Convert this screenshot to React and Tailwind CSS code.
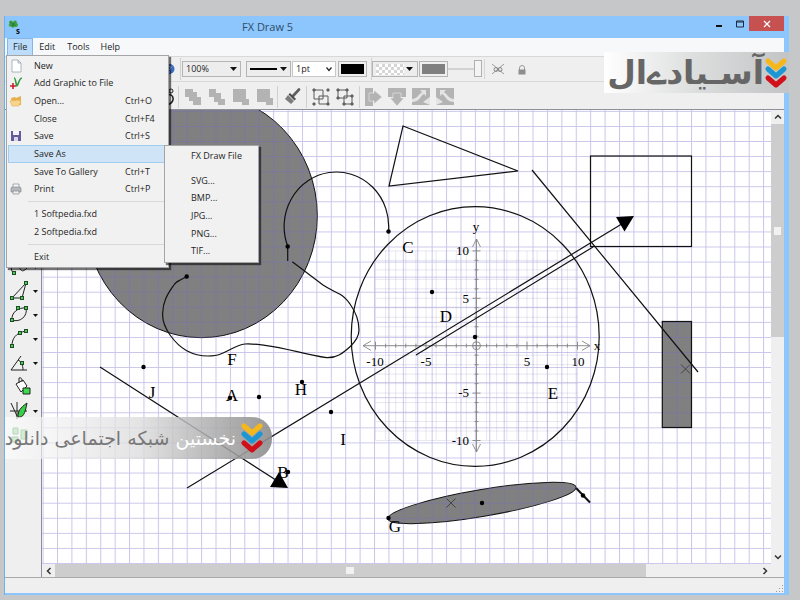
import React, { useState } from 'react';

const fileItems = [
  { label: 'New', icon: 'new' },
  { label: 'Add Graphic to File', icon: 'graphic' },
  { label: 'Open...', keys: 'Ctrl+O', icon: 'open' },
  { label: 'Close', keys: 'Ctrl+F4' },
  { label: 'Save', keys: 'Ctrl+S', icon: 'save' },
  { label: 'Save As', active: true },
  { label: 'Save To Gallery', keys: 'Ctrl+T' },
  { label: 'Print', keys: 'Ctrl+P', icon: 'print' },
];

const recentFiles = ['1 Softpedia.fxd', '2 Softpedia.fxd'];
const exportFormats = ['SVG...', 'BMP...', 'JPG...', 'PNG...', 'TIF...'];

const MenuIcon = ({ name }) => (
  <svg viewBox="0 0 14 14" className="w-3.5 h-3.5" aria-hidden="true">
    {name === 'new' && <path d="M3 1h6l3 3v9H3z M9 1v3h3" fill="#fff" stroke="#9aa4b2" strokeWidth="0.8" />}
    {name === 'graphic' && (
      <g fill="none">
        <path d="M5 2c2 0 2 8 3 8s2-8 5-8" stroke="#2f9a3c" strokeWidth="1.6" />
        <path d="M4 7v6M1 10h6" stroke="#c9202c" strokeWidth="1.6" />
      </g>
    )}
    {name === 'open' && (
      <g>
        <path d="M2 4l4-1 1 1 5-2v9H3z" fill="#e6b04c" />
        <path d="M1 7l8-1 3 1-2 5H3z" fill="#f8d48a" stroke="#e0a848" strokeWidth="0.5" />
      </g>
    )}
    {name === 'save' && (
      <g>
        <path d="M2 2h10v10H2z" fill="#665a9c" />
        <path d="M4 2h6v4H4z" fill="#f4f4fa" />
        <path d="M5 8h4v4H5z" fill="#d9d6ea" />
      </g>
    )}
    {name === 'print' && (
      <g stroke="#868a90" strokeWidth="0.7">
        <path d="M4 2h6v4H4z" fill="#f7f7f7" />
        <path d="M2 6l1-1h8l1 1v4H2z" fill="#b4b8bf" />
        <path d="M4 9h6v3H4z" fill="#eee" />
      </g>
    )}
  </svg>
);

const MenuRow = ({ label, keys, icon, active }) => (
  <button
    type="button"
    className={`flex items-center text-left border ${
      active ? 'bg-[#cfe4f7] border-[#a3cdee]' : 'border-transparent'
    }`}
  >
    <span className="w-[25px] shrink-0 flex items-center">{icon && <MenuIcon name={icon} />}</span>
    <span className="flex-1 whitespace-nowrap">{label}</span>
    {keys && <span className="w-8 mr-2.5 whitespace-nowrap">{keys}</span>}
  </button>
);

const FileMenu = () => (
  <div className="absolute z-20 left-px top-[39px] w-[163px] bg-[#f1f1f1] border border-[#a5a5a5] shadow-[2px_2px_1px_rgba(0,0,0,0.55)] pt-px pb-px pl-px text-[9px] leading-3">
    <div className="grid grid-rows-8 h-[141px]">
      {fileItems.map((item) => (
        <MenuRow key={item.label} {...item} />
      ))}
    </div>
    <div className="ml-5 h-px my-[3px] bg-[#d9d9d9]" />
    <div className="grid grid-rows-2 h-9">
      {recentFiles.map((name) => (
        <MenuRow key={name} label={name} />
      ))}
    </div>
    <div className="ml-5 h-px my-[3px] bg-[#d9d9d9]" />
    <div className="grid h-[18px]">
      <MenuRow label="Exit" />
    </div>
  </div>
);

const SaveAsMenu = () => (
  <div className="absolute z-30 left-[159px] top-[129px] w-[95px] bg-[#f1f1f1] border border-[#a5a5a5] shadow-[2px_2px_1px_rgba(0,0,0,0.55)] pt-px pb-0.5 text-[9px] leading-3">
    <button type="button" className="block w-full h-[18px] pl-[26px] text-left whitespace-nowrap">FX Draw File</button>
    <div className="grid grid-rows-5 h-[88px] mt-[7px]">
      {exportFormats.map((f) => (
        <button key={f} type="button" className="pl-[26px] text-left">{f}</button>
      ))}
    </div>
  </div>
);

const Caret = () => (
  <svg viewBox="0 0 7 4" className="w-[7px] h-1 shrink-0" aria-hidden="true">
    <path d="M0 0h7L3.5 4z" fill="#111" />
  </svg>
);

const Divider = () => <div className="w-px h-[22px] bg-[#d0d0d0] shrink-0" />;

const TitleBar = () => (
  <header className="h-[22px] shrink-0 flex items-start pl-[3px]">
    <svg viewBox="0 0 16 16" className="w-4 h-4 mt-1" aria-hidden="true">
      <g fill="#3fa344">
        <circle cx="3" cy="2.500" r="2" />
        <circle cx="7" cy="2.500" r="2" />
        <circle cx="2.500" cy="5" r="1.800" />
        <circle cx="8" cy="5" r="2" />
        <circle cx="5" cy="6" r="1.800" />
      </g>
      <path d="M2 2l6 4M7.500 2L3 6M5 3v4" stroke="#1b6a28" strokeWidth="0.700" />
      <text x="8" y="14" fontSize="8" fontWeight="bold" fontFamily="Open Sans, sans-serif" fill="#111">s</text>
    </svg>
    <h1 className="ml-[218px] flex-1 text-[11px] leading-[22px] text-[#2e4d69]">FX Draw 5</h1>
    <button type="button" aria-label="Minimize" className="w-6 h-[15px] flex items-center justify-center">
      <svg viewBox="0 0 8 8" className="w-2 h-2"><path d="M1 6h6" stroke="#111" strokeWidth="2" /></svg>
    </button>
    <button type="button" aria-label="Maximize" className="w-[18px] h-[15px] flex items-center justify-center">
      <svg viewBox="0 0 8 8" className="w-2 h-2"><path d="M.5 1h7v6h-7zM.5 2h7" fill="none" stroke="#1c2c3c" /></svg>
    </button>
    <button type="button" aria-label="Close" className="w-[35px] h-[15px] bg-[#c75050] flex items-center justify-center">
      <svg viewBox="0 0 8 8" className="w-2 h-2"><path d="M1 1l6 6M7 1L1 7" stroke="#fff" strokeWidth="1.3" /></svg>
    </button>
  </header>
);

const MenuBar = () => (
  <nav className="h-[18px] shrink-0 bg-[#f6f8fa] flex items-center pl-0.5 text-[9px] leading-4">
    <button type="button" className="px-[5px] bg-[#bcdcfb] border border-[#84b6ea]">File</button>
    <button type="button" className="px-[6px]">Edit</button>
    <button type="button" className="px-[6px]">Tools</button>
    <button type="button" className="px-[5px]">Help</button>
  </nav>
);

const StyleToolbar = () => {
  const [opacity, setOpacity] = useState(100);

  return (
    <div className="h-[26px] shrink-0 border-y border-[#d8d8d8] flex items-center pl-[159px]">
      <svg viewBox="0 0 11 12" className="w-[11px] h-3 shrink-0" aria-hidden="true">
        <circle cx="5.5" cy="6" r="5" fill="#3a6fc4" />
        <path d="M4 4.5c1-2 4-1 2.5 1L5.500 7M5.500 8.500v1" fill="none" stroke="#fff" />
      </svg>
      <div className="w-[5px]" />
      <Divider />
      <div className="ml-px relative flex items-center">
        <select aria-label="Zoom" className="appearance-none w-[59px] h-4 border border-[#b5b5b5] bg-[#ededed] pl-[3px] text-[9px] leading-3">
          <option>100%</option>
        </select>
        <span className="absolute right-1 pointer-events-none flex"><Caret /></span>
      </div>
      <button type="button" aria-label="Line style" className="ml-[5px] w-[45px] h-4 border border-[#b5b5b5] bg-[#ededed] flex items-center justify-between px-[3px]">
        <span className="w-[27px] h-0.5 bg-black" />
        <Caret />
      </button>
      <div className="ml-px relative flex items-center">
        <select aria-label="Line width" className="appearance-none w-[44px] h-4 border border-[#c8c8c8] bg-white pl-[3px] text-[9px] leading-3">
          <option>1pt</option>
        </select>
        <svg viewBox="0 0 6 6" className="absolute right-1 w-1.5 h-1.5 pointer-events-none" aria-hidden="true">
          <path d="M.5 1.500L3 4.500l2.500-3" fill="none" stroke="#222" strokeWidth="1.200" />
        </svg>
      </div>
      <button type="button" aria-label="Line colour" className="ml-0.5 w-[29px] h-4 border border-[#b5b5b5] p-0.5">
        <span className="block h-full bg-black" />
      </button>
      <div className="w-1" />
      <Divider />
      <button type="button" aria-label="Fill pattern" className="w-[46px] h-4 border border-[#b5b5b5] bg-[#ededed] flex items-center justify-between pl-[3px] pr-1">
        <svg className="w-7 h-[11px]" aria-hidden="true">
          <defs>
            <pattern id="checks" width="6" height="6" patternUnits="userSpaceOnUse">
              <rect width="6" height="6" fill="#fff" />
              <path d="M0 0h3v3H0zM3 3h3v3H3z" fill="#d6d6d6" />
            </pattern>
          </defs>
          <rect width="28" height="11" fill="url(#checks)" />
        </svg>
        <Caret />
      </button>
      <button type="button" aria-label="Fill colour" className="ml-px w-[29px] h-4 border border-[#b5b5b5] p-0.5">
        <span className="block h-full bg-[#808080]" />
      </button>
      <input
        type="range"
        aria-label="Opacity"
        value={opacity}
        onChange={(e) => setOpacity(e.target.value)}
        className="appearance-none w-[34px] h-[18px] bg-transparent [&::-webkit-slider-runnable-track]:h-0.5 [&::-webkit-slider-runnable-track]:bg-[#d2d2d2] [&::-webkit-slider-thumb]:appearance-none [&::-webkit-slider-thumb]:w-2 [&::-webkit-slider-thumb]:h-[17px] [&::-webkit-slider-thumb]:-mt-2 [&::-webkit-slider-thumb]:bg-[#f4f4f4] [&::-webkit-slider-thumb]:border [&::-webkit-slider-thumb]:border-[#b0b0b0]"
      />
      <div className="w-px h-5 ml-0.5 bg-[#d6d6d6]" />
      <button type="button" aria-label="Hide" className="ml-[6px]">
        <svg viewBox="0 0 14 14" className="w-3.5 h-3.5">
          <g fill="none" stroke="#858585">
            <path d="M1 2l12 10M13 2L1 12" strokeWidth="0.8" />
            <circle cx="5" cy="7.500" r="2" />
            <circle cx="9" cy="7.500" r="2" />
          </g>
        </svg>
      </button>
      <button type="button" aria-label="Lock" className="ml-3 mt-0.5">
        <svg viewBox="0 0 10 10" className="w-2.5 h-2.5">
          <path d="M2.500 5V3a2.500 2.500 0 015 0v2" fill="none" stroke="#9a9a9a" />
          <rect x="1.500" y="4.500" width="7" height="5" fill="#8e8e8e" />
        </svg>
      </button>
    </div>
  );
};

const editIcons = {
  front: <path d="M1 1h8v3h4v5h4v8h-8v-4H5V9H1z" fill="#b3b3b3" />,
  forward: <path d="M1 1h7v4h5v6h4v6h-7v-3H6V9H1z" fill="#b3b3b3" />,
  back: <path d="M1 1h13v10h3v6h-7v-3H1z" fill="#b3b3b3" />,
  backward: <path d="M1 1h13v9h3v7h-7v-3H1z" fill="#b3b3b3" />,
  brush: (
    <g>
      <path d="M16 1.500L10 8" stroke="#5d5d5d" strokeWidth="2.600" strokeLinecap="round" />
      <path d="M7 5l6 6-1.500 1.500-6-6z" fill="#4c4c4c" />
      <path d="M5 7l6 6-3 3-6-5z" fill="#7c7c7c" />
    </g>
  ),
  group: (
    <g fill="none" stroke="#5a5a5a">
      <path d="M2 2h9v9H2zM7 8h9v8H7z" />
      <path d="M1 1h2v2H1zM15 1h2v2h-2zM1 15h2v2H1zM15 15h2v2h-2z" fill="#777" />
    </g>
  ),
  ungroup: (
    <g fill="none" stroke="#5a5a5a">
      <path d="M2 2h9v8H2zM8 8h8v8H8z" />
      <path d="M1 1h2v2H1zM10 1h2v2h-2zM1 9h2v2H1zM7 15h2v2H7zM15 15h2v2h-2zM15 7h2v2h-2z" fill="#777" />
    </g>
  ),
  right: (
    <g fill="#b3b3b3">
      <path d="M1 0h8v18H1z" />
      <path d="M5 5h5V2l8 7-8 7v-3H5z" stroke="#efefef" strokeWidth="0.6" />
    </g>
  ),
  down: (
    <g fill="#b3b3b3">
      <path d="M0 0h18v9H0z" />
      <path d="M5 5v5H2l7 8 7-8h-3V5z" stroke="#efefef" strokeWidth="0.6" />
    </g>
  ),
  rotateLeft: (
    <g>
      <path d="M0 0h18v17H0z" fill="#b3b3b3" />
      <path d="M8 2h6v6l-2-2c-4 2-4 8-12 8v-3c5 0 6-4 10-7zM11 14l7-5v8z" fill="#e4e4e4" />
    </g>
  ),
  rotateRight: (
    <g>
      <path d="M0 0h18v17H0z" fill="#b3b3b3" />
      <path d="M10 2H4v6l2-2c4 2 4 8 12 8v-3c-5 0-6-4-10-7zM7 14L0 9v8z" fill="#e4e4e4" />
    </g>
  ),
};

const EditButton = ({ name }) => (
  <button type="button" aria-label={name} className="w-6 h-6 flex items-center justify-center">
    <svg viewBox="0 0 18 18" className="w-[18px] h-[18px]">{editIcons[name]}</svg>
  </button>
);

const EditToolbar = () => (
  <div className="h-7 shrink-0 border-b border-[#8e8e9c] flex items-center pt-0.5 pl-[157px]">
    <svg viewBox="0 0 12 18" className="w-3 h-[18px] shrink-0" aria-hidden="true">
      <g fill="none" stroke="#222">
        <circle cx="9" cy="3" r="2" />
        <path d="M4 7c9-3 10 9 0 10" strokeWidth="1.600" />
      </g>
    </svg>
    <div className="w-1" />
    <Divider />
    <div className="w-0.5" />
    <EditButton name="front" />
    <EditButton name="forward" />
    <EditButton name="back" />
    <EditButton name="backward" />
    <Divider />
    <div className="w-0.5" />
    <EditButton name="brush" />
    <div className="w-0.5" />
    <Divider />
    <div className="w-0.5" />
    <EditButton name="group" />
    <EditButton name="ungroup" />
    <div className="w-0.5" />
    <Divider />
    <div className="w-px" />
    <EditButton name="right" />
    <EditButton name="down" />
    <EditButton name="rotateLeft" />
    <EditButton name="rotateRight" />
  </div>
);

// small green handles shared by the shape tools
const Handle = ({ x, y }) => (
  <rect x={x - 1.5} y={y - 1.5} width="3" height="3" fill="#4fc95a" stroke="#1d4d22" />
);

const shapeTools = [
  {
    name: 'Curve',
    menu: true,
    art: <g><path d="M4 16C-1 8 6 2 9 8s4 8 9 3" /><Handle x={5} y={16} /></g>,
  },
  {
    name: 'Polygon',
    menu: true,
    art: <g><path d="M3 17L17 2l-4 15z" /><Handle x={17} y={2} /><Handle x={3} y={17} /><Handle x={13} y={17} /></g>,
  },
  {
    name: 'Ellipse',
    menu: true,
    art: <g><path d="M3 15C2 8 9 2 17 3c2 8-6 15-14 12z" /><Handle x={3} y={15} /><Handle x={9} y={3} /><Handle x={17} y={3} /></g>,
  },
  {
    name: 'Arc',
    menu: true,
    art: <g><path d="M3 17C3 10 6 4 17 2" /><Handle x={3} y={17} /><Handle x={11} y={4} /><Handle x={17} y={2} /></g>,
  },
  {
    name: 'Angle',
    menu: true,
    art: <g><path d="M12 3L2 17h16M9 7c3 1 5 5 5 10" /><Handle x={13} y={10} /></g>,
  },
  {
    name: 'Fill',
    art: (
      <g>
        <path d="M7 7l7-4 4 6-6 6z" fill="#fff" />
        <path d="M10 6V1c3-1 3 2 3 4" />
        <path d="M14 11h7v6h-7z" fill="#3ddc4e" />
      </g>
    ),
  },
  {
    name: 'Function',
    menu: true,
    art: (
      <g>
        <path d="M1 10h17M8 1v17M2 2l6 13" />
        <path d="M18 2c-7 5-9 8-9 14 5 1 7-3 9-14z" fill="#35d046" />
      </g>
    ),
  },
  {
    name: 'Text',
    art: <g stroke="#4d9c56"><path d="M4 3h5v6H4zM12 5h6v9h-6zM3 12h6v5H3z" fill="#8fd497" /></g>,
  },
];

const ShapeBar = () => (
  <aside className="w-[37px] shrink-0 border-r border-[#8e8e9c] pt-[145px] pl-1">
    {shapeTools.map((tool) => (
      <button key={tool.name} type="button" aria-label={tool.name} className="w-[29px] h-6 flex items-center">
        <svg viewBox="0 0 22 20" className="w-[22px] h-5 shrink-0" fill="none" stroke="#222">{tool.art}</svg>
        {tool.menu && (
          <svg viewBox="0 0 5 3" className="w-[5px] h-[3px] ml-0.5 shrink-0" aria-hidden="true"><path d="M0 0h5L2.500 3z" fill="#111" /></svg>
        )}
      </button>
    ))}
  </aside>
);

const pointLabels = [
  ['A', 232, 401], ['B', 283, 478], ['C', 408, 253], ['D', 446, 322], ['E', 553, 399],
  ['F', 232, 365], ['G', 395, 532], ['H', 301, 395], ['I', 343, 445], ['J', 152, 398],
];

const points = [
  [143.5, 367], [259, 397], [230, 398], [302, 382], [331, 412], [432, 292], [475, 337], [547, 367],
  [288, 472], [388.5, 231.5], [388.5, 518], [287.7, 246.5], [186.7, 276.5], [482, 503], [583, 495.5],
];

const origin = { x: 476.5, y: 345.7 };
const unit = { x: 10.1, y: 9.48 };
const steps = Array.from({ length: 21 }, (_, i) => i - 10);

const Axes = () => {
  const { x: ox, y: oy } = origin;

  return (
    <g>
      <g stroke="#8f88bb" strokeOpacity="0.2">
        {steps.map((n) => (
          <path key={n} d={`M${ox + n * unit.x} 251v189M375.500 ${oy + n * unit.y}h202`} />
        ))}
      </g>
      <g stroke="#858585" fill="none" strokeWidth="0.9">
        <path d="M363 345.700H590M476.500 239V452" />
        <path d="M371 341l-8 4.700 8 4.700M582 341l8 4.700-8 4.700M472.500 247l4-8 4 8M472.500 444l4 8 4-8" />
        <circle cx={ox} cy={oy} r="4" />
        {steps.map((n) => {
          const len = n % 5 === 0 ? 4 : 2;
          return (
            <path
              key={n}
              d={`M${ox + n * unit.x} ${oy - len}v${len * 2}M${ox - len} ${oy + n * unit.y}h${len * 2}`}
            />
          );
        })}
      </g>
      <g fontSize="13" textAnchor="middle">
        <text x="375" y="366">-10</text>
        <text x="426" y="366">-5</text>
        <text x="527" y="366">5</text>
        <text x="578" y="366">10</text>
        <text x="597" y="350">x</text>
        <text x="476" y="231">y</text>
      </g>
      <g fontSize="13" textAnchor="end">
        <text x="469" y="255">10</text>
        <text x="469" y="303">5</text>
        <text x="469" y="397">-5</text>
        <text x="469" y="445">-10</text>
      </g>
    </g>
  );
};

const Drawing = () => (
  <svg className="absolute inset-0 w-full h-full bg-white" fontFamily="Liberation Serif, serif" role="img" aria-label="Drawing">
    <defs>
      <pattern id="grid" x="15" y="0.9" width="14.41" height="15.07" patternUnits="userSpaceOnUse">
        <path d="M0.500 0V15.070M0 0.500H14.410" stroke="#7069c8" strokeOpacity="0.38" />
      </pattern>
    </defs>
    <g transform="translate(-42 -110)">
      <ellipse cx="201.300" cy="215.700" rx="116" ry="122" fill="#808080" stroke="#111" />
      <rect x="662.300" y="321.500" width="29.200" height="106" fill="#808080" />
      <ellipse cx="482" cy="503" rx="95.300" ry="13.400" fill="#808080" stroke="#111" transform="rotate(-9.600 482 503)" />
    </g>
    <rect width="100%" height="100%" fill="url(#grid)" />
    <g transform="translate(-42 -110)">
      <Axes />
      <g fill="none" stroke="#111" strokeWidth="1.200">
        <ellipse cx="475.200" cy="336.500" rx="124" ry="129.800" />
        <path d="M388.500 231.500A52.300 54.500 0 1 0 287.700 246.300V261" />
        <path d="M186.700 276.700C180 280 176 281 172.700 286.700C167 295 163 302 162.700 312.700C162 321 165 328 170 335C175 342 180 347 186.700 350.700C193 354 200 356 208 356C213 356 216 356 220 354.300C229 351 236 345 245 344C252 343.500 258 344.500 265 345.300C288 348 305 355 326.700 357.700C337 358 343 353 350 346.700C355 342 359 337 359 330C359 321 355 311 350 304C347 300 345 297 340 294.300C334 291 329 289 323 285L292.300 261.700" />
        <path d="M403 126L518 171L389 186Z" />
        <rect x="590.500" y="156" width="101" height="90.500" />
        <rect x="662.300" y="321.500" width="29.200" height="106" />
        <path d="M532 170L698 372M187 488L625 222M416 355L593 247M100 367L279 482" />
        <path d="M576 488L590 502.500" strokeWidth="2" />
        <path d="M681 364.500l9 9M690 364.500l-9 9M446.500 498.500l9 9M455.500 498.500l-9 9" stroke="#3c3c3c" strokeWidth="0.900" />
      </g>
      <path d="M634 216L616 217L624.500 231.500ZM288 488L270 487L279 472Z" />
      {points.map(([x, y]) => (
        <circle key={`${x}-${y}`} cx={x} cy={y} r="2.2" />
      ))}
      <g fontSize="17" textAnchor="middle">
        {pointLabels.map(([name, x, y]) => (
          <text key={name} x={x} y={y}>{name}</text>
        ))}
      </g>
    </g>
  </svg>
);

const arrows = {
  up: 'M1 5.500L4 2.500l3 3',
  down: 'M1 2.500l3 3 3-3',
  left: 'M5.500 1L2.500 4l3 3',
  right: 'M2.500 1l3 3-3 3',
};

const ScrollArrow = ({ dir }) => (
  <button type="button" aria-label={`Scroll ${dir}`} className="w-[13px] h-3.5 shrink-0 flex items-center justify-center">
    <svg viewBox="0 0 8 8" className="w-2 h-2"><path d={arrows[dir]} fill="none" stroke="#333" strokeWidth="1.500" /></svg>
  </button>
);

const Workspace = () => (
  <div className="flex-1 min-w-0 grid grid-cols-[1fr_13px] grid-rows-[1fr_13px]">
    <div className="relative overflow-hidden">
      <Drawing />
    </div>
    <div className="flex flex-col">
      <ScrollArrow dir="up" />
      <div className="flex-1">
        <div className="h-1/2 bg-[#cdcdcd] flex items-center justify-center">
          <div className="w-[7px] h-2 bg-[#f2f2f2]" />
        </div>
      </div>
      <ScrollArrow dir="down" />
    </div>
    <div className="flex items-center h-[13px]">
      <ScrollArrow dir="left" />
      <div className="flex-1 h-full">
        <div className="w-[84%] h-full bg-[#cdcdcd] flex items-center justify-center">
          <div className="w-2 h-[7px] bg-[#f2f2f2]" />
        </div>
      </div>
      <ScrollArrow dir="right" />
    </div>
  </div>
);

const Chevrons = ({ className }) => (
  <svg viewBox="0 0 24 32" className={className} fill="none" strokeWidth="5" strokeLinecap="round" strokeLinejoin="round" aria-hidden="true">
    <path d="M4 4l8 7 8-7" stroke="#f5b81c" />
    <path d="M4 12l8 7 8-7" stroke="#1c97d4" />
    <path d="M4 21l8 7 8-7" stroke="#d0111b" />
  </svg>
);

export default function App() {
  return (
    <div className="h-screen bg-[#c6c7c8] pt-4 pl-1 pr-[11px] pb-[5px] font-['Open_Sans',sans-serif] text-[#1e1e1e]">
      <div className="relative h-full flex flex-col bg-[#8cc6fc] border-l border-[#6fb0ea] pr-[5px] pb-0.5">
        <TitleBar />
        <main className="flex-1 min-h-0 flex flex-col bg-[#efefef]">
          <MenuBar />
          <StyleToolbar />
          <EditToolbar />
          <div className="flex-1 min-h-0 flex">
            <ShapeBar />
            <Workspace />
          </div>
          <footer className="h-4 shrink-0 border-t border-[#a9a9a9] flex justify-end items-end">
            <svg viewBox="0 0 8 8" className="w-2 h-2" aria-hidden="true">
              <path d="M6 0h1v1H6zM3 3h1v1H3zM6 3h1v1H6zM0 6h1v1H0zM3 6h1v1H3zM6 6h1v1H6z" fill="#999" />
            </svg>
          </footer>
        </main>

        <FileMenu />
        <SaveAsMenu />

        <div dir="rtl" className="absolute right-0 top-9 w-[185px] h-[41px] pr-px flex items-center bg-linear-to-r from-white via-[#dcdddd] to-[#c3c4c5]">
          <Chevrons className="w-6 h-8 shrink-0" />
          <span className="font-['DejaVu_Sans',sans-serif] font-bold text-[33px] leading-10 text-[#666] whitespace-nowrap">آسـیادےال</span>
        </div>
        <div dir="rtl" className="absolute left-0 top-[401px] w-[267px] h-[42px] pr-2 flex items-center gap-1 rounded-r-[20px] bg-linear-to-r from-white/60 via-[#dddddd]/80 to-[#8c8c8c]/90">
          <Chevrons className="w-6 h-8 shrink-0" />
          <span className="font-['DejaVu_Sans',sans-serif] text-[19px] leading-10 text-[#777] whitespace-nowrap">
            <span className="text-white">نخستین</span> شبکه اجتماعی دانلود
          </span>
        </div>
      </div>
    </div>
  );
}
